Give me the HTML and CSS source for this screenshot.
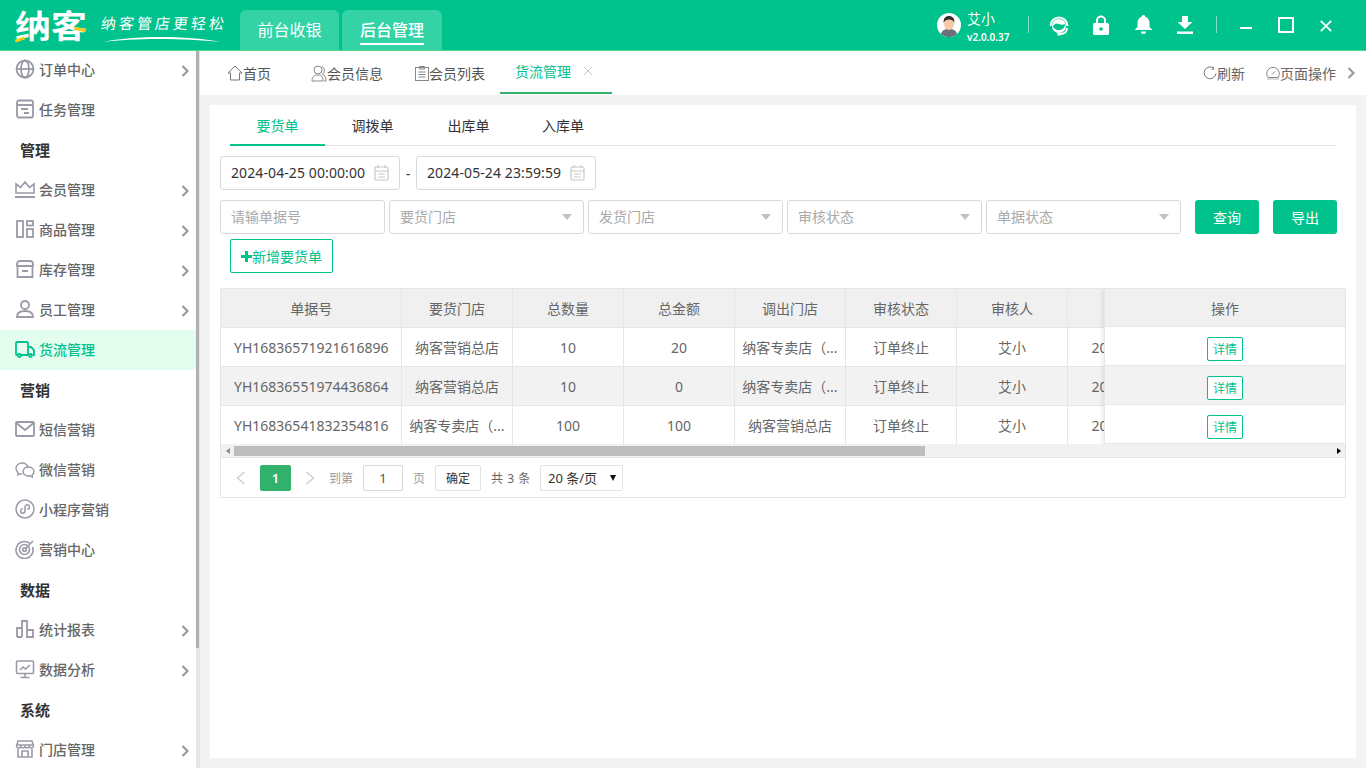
FILE: index.html

```html
<!DOCTYPE html>
<html lang="zh-CN">
<head>
  <meta charset="UTF-8">
  <title>纳客 - 货流管理</title>
  <link rel="stylesheet" href="styles.css">
</head>
<body>

  <svg class="defs" width="0" height="0">
    <defs>
      <symbol id="chev" viewBox="0 0 8 12"><path d="M1.500 1l5 5-5 5" fill="none" stroke="#9a9aa8" stroke-width="2.200"/></symbol>
      <symbol id="cal" viewBox="0 0 15 16"><g fill="none" stroke="#c8c8c8" stroke-width="1.200"><rect x="1" y="2" width="13" height="13" rx="1"/><path d="M1 6h13M4 0v3M11 0v3M4 9h7M4 12h7"/></g></symbol>
    </defs>
  </svg>

  <header class="topbar">
    <div class="logo">
      <span class="logo-name">纳客</span>
      <i class="logo-mark mark-a"></i>
      <i class="logo-mark mark-b"></i>
      <div class="slogan">
        <span>纳客管店更轻松</span>
        <svg width="118" height="8" viewBox="0 0 118 8"><path d="M0 7C30 1 80 0 118 7C80 3 30 3 0 7z" fill="#fff"/></svg>
      </div>
    </div>
    <nav class="top-tabs">
      <a class="top-tab">前台收银</a>
      <a class="top-tab on"><span>后台管理</span></a>
    </nav>
    <div class="top-right">
      <svg class="avatar" width="24" height="24" viewBox="0 0 24 24">
        <circle cx="12" cy="12" r="12" fill="#fff"/>
        <path d="M4 21c1-4 4-5 8-5s7 1 8 5a12 12 0 0 1-16 0z" fill="#6d6f78"/>
        <ellipse cx="12" cy="11" rx="5" ry="6" fill="#f5c9a8"/>
        <path d="M6.700 10c-.5-5 2-7 5.300-7s5.800 2 5.300 7c-1-3-3-3.500-5.300-3.500S7.700 7 6.700 10z" fill="#33302e"/>
      </svg>
      <div class="user">
        <span class="user-name">艾小</span>
        <span class="user-ver">v2.0.0.37</span>
      </div>
      <i class="sep sep-a"></i>
      <svg class="ti ti-head" width="22" height="22" viewBox="0 0 22 22">
        <path d="M2.500 12a8.500 8.500 0 0 1 17 0" fill="none" stroke="#fff" stroke-width="2"/>
        <circle cx="11" cy="12" r="7" fill="#fff"/>
        <path d="M5 12c2-3 4-3 6-2s4 1 6 0c0 4-3 6-6 6s-6-2-6-4z" fill="#00c28c"/>
        <path d="M19 14c0 4-3 6-7 6" fill="none" stroke="#fff" stroke-width="1.800"/>
        <circle cx="11" cy="20" r="1.800" fill="#fff"/>
      </svg>
      <svg class="ti ti-lock" width="16" height="20" viewBox="0 0 16 20">
        <path d="M4 9V5.500a4 4 0 0 1 8 0V9" fill="none" stroke="#fff" stroke-width="2"/>
        <rect y="8" width="16" height="12" rx="1.500" fill="#fff"/>
        <circle cx="8" cy="14" r="1.800" fill="#00c28c"/>
      </svg>
      <svg class="ti ti-bell" width="17" height="19" viewBox="0 0 17 19">
        <path d="M8.500 0c1 0 1.500.6 1.500 1.400C13 2.200 14.500 5 14.500 8v4l2.500 2.500V15H0v-.5L2.500 12V8C2.500 5 4 2.200 7 1.400 7 .6 7.500 0 8.500 0z" fill="#fff"/>
        <path d="M6 16.500h5a2.500 2.500 0 0 1-5 0z" fill="#fff"/>
      </svg>
      <svg class="ti ti-down" width="16" height="18" viewBox="0 0 16 18">
        <path d="M5 0h6v6h4.500L8 13 .5 6H5z" fill="#fff"/>
        <rect y="15.500" width="16" height="2.500" fill="#fff"/>
      </svg>
      <i class="sep sep-b"></i>
      <i class="win-min"></i>
      <i class="win-max"></i>
      <svg class="win-close" width="12" height="12" viewBox="0 0 12 12"><path d="M.8.8l10.400 10.400M11.200.8L.8 11.200" stroke="#fff" stroke-width="1.800"/></svg>
    </div>
  </header>

  <div class="wrap">
    <aside class="side">
      <div class="side-list">
        <a class="item">
          <svg viewBox="0 0 20 20"><g fill="none" stroke="#9a9aa8" stroke-width="1.800"><circle cx="10" cy="10" r="8.500"/><ellipse cx="10" cy="10" rx="4" ry="8.500"/><path d="M1.500 10h17"/></g></svg>
          <span>订单中心</span><svg class="chev"><use href="#chev"/></svg>
        </a>
        <a class="item">
          <svg viewBox="0 0 20 20"><g fill="none" stroke="#9a9aa8" stroke-width="1.800"><rect x="2" y="1.500" width="16" height="17" rx="2"/><path d="M2 6h16M6 10h7M9 14h5"/></g></svg>
          <span>任务管理</span>
        </a>
        <div class="group">管理</div>
        <a class="item">
          <svg viewBox="0 0 20 20"><g fill="none" stroke="#9a9aa8" stroke-width="1.600"><path d="M1 14V5l4.500 3.500L10 3l4.500 5.500L19 5v9z"/><path d="M0 18h20" stroke-width="2"/></g></svg>
          <span>会员管理</span><svg class="chev"><use href="#chev"/></svg>
        </a>
        <a class="item">
          <svg viewBox="0 0 20 20"><g fill="none" stroke="#9a9aa8" stroke-width="1.800"><rect x="2" y="2" width="6" height="16"/><rect x="12" y="2" width="6" height="4.500"/><rect x="12" y="10" width="6" height="8"/></g></svg>
          <span>商品管理</span><svg class="chev"><use href="#chev"/></svg>
        </a>
        <a class="item">
          <svg viewBox="0 0 20 20"><g fill="none" stroke="#9a9aa8" stroke-width="1.800"><path d="M2 7V5a3 3 0 0 1 3-3h10a3 3 0 0 1 3 3v2M1.500 7h17"/><path d="M2.500 7v11h15V7M7 12h6"/></g></svg>
          <span>库存管理</span><svg class="chev"><use href="#chev"/></svg>
        </a>
        <a class="item">
          <svg viewBox="0 0 20 20"><g fill="none" stroke="#9a9aa8" stroke-width="1.800"><circle cx="10" cy="6" r="4"/><path d="M2 18c0-4 3-6 8-6s8 2 8 6z"/></g></svg>
          <span>员工管理</span><svg class="chev"><use href="#chev"/></svg>
        </a>
        <a class="item active">
          <svg viewBox="0 0 20 20"><g fill="none" stroke="#00c28c" stroke-width="1.800"><path d="M13 16H6M3 16H2a1 1 0 0 1-1-1V4a1 1 0 0 1 1-1h10a1 1 0 0 1 1 1v12"/><path d="M13 8h3l3 3v5h-1"/><circle cx="4.500" cy="16.500" r="1.500"/><circle cx="15.500" cy="16.500" r="1.500"/></g></svg>
          <span>货流管理</span>
        </a>
        <div class="group">营销</div>
        <a class="item">
          <svg viewBox="0 0 20 20"><g fill="none" stroke="#9a9aa8" stroke-width="1.800"><rect x="1" y="3" width="18" height="14" rx="1"/><path d="M1.500 4l8.500 7 8.500-7"/></g></svg>
          <span>短信营销</span>
        </a>
        <a class="item">
          <svg viewBox="0 0 20 20"><g fill="none" stroke="#9a9aa8" stroke-width="1.400"><path d="M7 15c-.8 0-1.400-.1-2-.3L3 16v-2.500C1.800 12.400 1 11 1 9.500 1 6.400 3.700 4 7 4c2.800 0 5.200 1.700 5.800 4"/><path d="M13.500 8c3 0 5.500 2 5.500 4.500 0 1.300-.7 2.500-1.700 3.300V18l-2-1.200c-.6.100-1.200.2-1.800.2-3 0-5.500-2-5.500-4.500S10.500 8 13.500 8z"/></g></svg>
          <span>微信营销</span>
        </a>
        <a class="item">
          <svg viewBox="0 0 20 20"><g fill="none" stroke="#9a9aa8" stroke-width="1.500"><circle cx="10" cy="10" r="9"/><path d="M10 8v4a2.200 2.200 0 1 1-2.200-2.200M10 12V8a2.200 2.200 0 1 1 2.200 2.200"/></g></svg>
          <span>小程序营销</span>
        </a>
        <a class="item">
          <svg viewBox="0 0 20 20"><g fill="none" stroke="#9a9aa8" stroke-width="1.600"><path d="M15 4.500A8.500 8.500 0 1 0 17.500 8"/><circle cx="9.500" cy="10.500" r="5"/><circle cx="9.500" cy="10.500" r="1.800"/><path d="M10 10l8-8"/></g></svg>
          <span>营销中心</span>
        </a>
        <div class="group">数据</div>
        <a class="item">
          <svg viewBox="0 0 20 20"><g fill="none" stroke="#9a9aa8" stroke-width="1.800"><path d="M2 18v-9h5v9M7 18V2h5v16M12 18v-7h6v7zM2 18h5"/></g></svg>
          <span>统计报表</span><svg class="chev"><use href="#chev"/></svg>
        </a>
        <a class="item">
          <svg viewBox="0 0 20 20"><g fill="none" stroke="#9a9aa8" stroke-width="1.600"><rect x="1.500" y="2" width="17" height="12.500" rx="1"/><path d="M5 11l3-3 2.500 2L15 6M10 14.500V18M5.500 18.500h9"/></g></svg>
          <span>数据分析</span><svg class="chev"><use href="#chev"/></svg>
        </a>
        <div class="group">系统</div>
        <a class="item">
          <svg viewBox="0 0 20 20"><g fill="none" stroke="#9a9aa8" stroke-width="1.600"><path d="M3 2h14l1.500 5a2.200 2.200 0 0 1-4.300.5 2.200 2.200 0 0 1-4.200 0 2.200 2.200 0 0 1-4.200 0A2.200 2.200 0 0 1 1.500 7z"/><path d="M3 10v8h14v-8M7 18v-6h6v6M1.500 6h17"/></g></svg>
          <span>门店管理</span><svg class="chev"><use href="#chev"/></svg>
        </a>
      </div>
      <div class="side-bar"><i></i></div>
    </aside>

    <main class="main">
      <div class="tabs">
        <a class="tab t-home">
          <svg width="16" height="16" viewBox="0 0 16 16"><path d="M1 8l7-7 7 7h-2.500v7h-9V8z" fill="none" stroke="#777" stroke-width="1"/></svg>首页
        </a>
        <a class="tab t-info">
          <svg width="16" height="17" viewBox="0 0 16 17"><g fill="none" stroke="#888" stroke-width="1"><circle cx="7" cy="5" r="4"/><path d="M1 16c0-4 2-6 6-6s5 2 5 6zM11 1.500c3 1 3 6 .5 7.500 2 1 3.500 3 3.500 7h-2"/></g></svg>会员信息
        </a>
        <a class="tab t-list">
          <svg width="14" height="15" viewBox="0 0 14 15"><g fill="none" stroke="#888" stroke-width="1"><rect x=".5" y="1.500" width="13" height="13"/><path d="M4.500 .5h5v2.500h-5zM3.500 6h7M3.500 8.500h7M3.500 11h7"/></g></svg>会员列表
        </a>
        <a class="tab t-cur">货流管理<svg width="10" height="10" viewBox="0 0 10 10"><path d="M.5.500l9 9M9.500.500l-9 9" stroke="#ccc" stroke-width="1"/></svg></a>
        <div class="tab-tools">
          <a class="tool t-refresh">
            <svg width="14" height="14" viewBox="0 0 14 14"><path d="M10.800 2.300A5.900 5.900 0 1 0 12.900 7.500M10 .8l.9 2.200-2.300.5" fill="none" stroke="#777" stroke-width="1"/></svg>刷新
          </a>
          <a class="tool t-ops">
            <svg width="14" height="14" viewBox="0 0 14 14"><path d="M2 11.500a6.300 6.300 0 1 1 10 0z M6 8.500l3-3" fill="none" stroke="#888" stroke-width="1"/><path d="M1 13h12" stroke="#ccc" stroke-width="1.500"/></svg>页面操作
          </a>
          <svg class="tool-chev"><use href="#chev"/></svg>
        </div>
      </div>

      <section class="card">
        <div class="subtabs">
          <a class="subtab on">要货单</a>
          <a class="subtab">调拨单</a>
          <a class="subtab st-out">出库单</a>
          <a class="subtab st-in">入库单</a>
        </div>

        <div class="date-row">
          <div class="field date">2024-04-25 00:00:00<svg><use href="#cal"/></svg></div>
          <span class="dash">-</span>
          <div class="field date">2024-05-24 23:59:59<svg><use href="#cal"/></svg></div>
        </div>

        <div class="filter-row">
          <div class="field ph f-no">请输单据号</div>
          <div class="field ph sel">要货门店</div>
          <div class="field ph sel">发货门店</div>
          <div class="field ph sel">审核状态</div>
          <div class="field ph sel">单据状态</div>
          <a class="btn">查询</a>
          <a class="btn">导出</a>
        </div>

        <a class="add"><svg width="11" height="11" viewBox="0 0 11 11"><path d="M4 0h3v4h4v3H7v4H4V7H0V4h4z" fill="#00c28c"/></svg>新增要货单</a>

        <div class="grid">
          <div class="grid-scroll">
            <table>
              <colgroup>
                <col class="c-first"><col class="c"><col class="c"><col class="c"><col class="c"><col class="c"><col class="c"><col class="c-time-col">
              </colgroup>
              <thead>
                <tr><th>单据号</th><th>要货门店</th><th>总数量</th><th>总金额</th><th>调出门店</th><th>审核状态</th><th>审核人</th><th></th></tr>
              </thead>
              <tbody>
                <tr><td>YH16836571921616896</td><td>纳客营销总店</td><td>10</td><td>20</td><td>纳客专卖店（...</td><td>订单终止</td><td>艾小</td><td class="c-time">20</td></tr>
                <tr class="alt"><td>YH16836551974436864</td><td>纳客营销总店</td><td>10</td><td>0</td><td>纳客专卖店（...</td><td>订单终止</td><td>艾小</td><td class="c-time">20</td></tr>
                <tr><td>YH16836541832354816</td><td>纳客专卖店（...</td><td>100</td><td>100</td><td>纳客营销总店</td><td>订单终止</td><td>艾小</td><td class="c-time">20</td></tr>
              </tbody>
            </table>
            <div class="grid-fixed">
              <div class="fx-head">操作</div>
              <div class="fx-cell"><a class="detail">详情</a></div>
              <div class="fx-cell alt"><a class="detail">详情</a></div>
              <div class="fx-cell"><a class="detail">详情</a></div>
            </div>
          </div>
          <div class="hscroll">
            <i class="arrow-l"></i>
            <div class="thumb-track"><i class="thumb"></i></div>
            <i class="arrow-r"></i>
          </div>
          <div class="pager">
            <svg class="pg-prev" width="10" height="14" viewBox="0 0 10 14"><path d="M8.500 1l-7 6 7 6" fill="none" stroke="#ccc" stroke-width="1.300"/></svg>
            <a class="pg-cur">1</a>
            <svg class="pg-next" width="10" height="14" viewBox="0 0 10 14"><path d="M1.500 1l7 6-7 6" fill="none" stroke="#ccc" stroke-width="1.300"/></svg>
            <span class="pg-to">到第</span>
            <div class="pg-input">1</div>
            <span class="pg-page">页</span>
            <a class="pg-ok">确定</a>
            <span class="pg-total">共 3 条</span>
            <div class="pg-size">20 条/页<i></i></div>
          </div>
        </div>
      </section>
    </main>
  </div>

</body>
</html>
```

FILE: styles.css

```css
* { box-sizing: border-box; }
html, body { height: 100%; }
body {
  margin: 0;
  height: 768px;
  overflow: hidden;
  font-family: "Noto Sans", "Noto Sans CJK SC", sans-serif;
  font-size: 14px;
  color: #333;
  background: #f3f3f3;
}
.defs { position: absolute; }
a { display: block; }

/* top bar */
.topbar {
  height: 51px;
  display: flex;
  background: #00c28c;
  border-bottom: 1px solid #4cd98a;
  color: #fff;
}
.logo { width: 240px; position: relative; }
.logo-name {
  position: absolute;
  left: 15px;
  top: 5px;
  font-size: 36px;
  line-height: 44px;
  font-weight: 700;
  transform: scaleY(.88);
}
.logo-mark { position: absolute; background: #ffc81e; height: 3px; }
.mark-a { left: 15px; top: 38px; width: 10px; transform: rotate(-20deg); }
.mark-b { left: 74px; top: 28px; width: 12px; transform: rotate(12deg); }
.slogan { position: absolute; left: 101px; top: 12px; }
.slogan span {
  display: block;
  font-size: 15px;
  line-height: 22px;
  letter-spacing: 3px;
  transform: skewX(-8deg);
  white-space: nowrap;
}
.slogan svg { display: block; margin: 1px 0 0 2px; }
.top-tabs { display: flex; gap: 3px; padding-top: 10px; }
.top-tab {
  width: 99px;
  height: 40px;
  background: #33d3a6;
  border-radius: 6px 6px 0 0;
  text-align: center;
  font-size: 16px;
  line-height: 40px;
}
.top-tab.on { width: 100px; font-weight: 500; }
.top-tab.on span {
  display: inline-block;
  height: 35px;
  line-height: 40px;
  border-bottom: 2px solid #fff;
}
.top-right { flex: 1; display: flex; align-items: flex-start; padding-left: 495px; }
.top-right > * { flex: none; }
.avatar { margin-top: 13px; }
.user { width: 41px; margin: 10px 0 0 6px; }
.user span { display: block; white-space: nowrap; }
.user-name { font-size: 14px; line-height: 18px; }
.user-ver { font-size: 10px; line-height: 14px; margin-top: 2px; font-weight: 600; }
.sep { width: 1px; height: 17px; margin-top: 16px; background: rgba(255, 255, 255, .5); }
.sep-a { margin-left: 20px; }
.sep-b { margin-left: 23px; }
.ti-head { margin: 14px 0 0 19px; }
.ti-lock { margin: 15px 0 0 23px; }
.ti-bell { margin: 15px 0 0 26px; }
.ti-down { margin: 16px 0 0 25px; }
.win-min { margin: 27px 0 0 23px; width: 12px; height: 2px; background: #fff; }
.win-max { margin: 17px 0 0 26px; width: 16px; height: 16px; border: 2px solid #fff; }
.win-close { margin: 20px 0 0 26px; }

/* side menu */
.wrap { display: flex; height: 717px; }
.side { width: 200px; display: flex; overflow: hidden; background: #fff; flex: none; }
.side-list { width: 196px; margin-top: -1px; flex: none; }
.item {
  height: 40px;
  display: flex;
  align-items: center;
  padding: 0 0 2px 15px;
  color: #666;
  font-weight: 500;
  font-size: 14px;
  position: relative;
}
.item > svg:first-child { width: 20px; height: 20px; margin-right: 4px; flex: none; }
.item .chev { position: absolute; left: 181px; top: 15px; width: 8px; height: 12px; }
.item.active { background: #e3fdee; color: #00c28c; }
.group {
  height: 40px;
  padding-left: 20px;
  line-height: 40px;
  font-weight: 700;
  color: #333;
  font-size: 15px;
}
.side-bar { width: 4px; background: #e6e6e6; }
.side-bar i { display: block; height: 597px; width: 3px; background: #b0b0b0; }

/* main */
.main { flex: 1; min-width: 0; }
.tabs { height: 44px; background: #fff; display: flex; position: relative; }
.tab {
  display: flex;
  align-items: center;
  height: 44px;
  color: #555;
  font-size: 14px;
  position: absolute;
  top: 0;
  white-space: nowrap;
}
.t-home { left: 27px; }
.t-info { left: 111px; }
.t-list { left: 215px; }
.t-cur {
  left: 300px;
  width: 112px;
  height: 43px;
  padding: 0 0 2px 15px;
  color: #00c28c;
  border-bottom: 2px solid #32b16c;
}
.t-cur svg { margin-left: 12px; }
.tab-tools { position: absolute; right: 0; top: 0; height: 44px; display: flex; align-items: center; color: #666; }
.tool { display: flex; align-items: center; margin-right: 21px; font-size: 14px; }
.tool svg { flex: none; }
.t-ops { margin-right: 11px; }
.tool-chev { width: 8px; height: 12px; margin-right: 11px; }

.card {
  margin: 10px 10px 0;
  height: 653px;
  background: #fff;
  padding: 0 10px;
}
.subtabs {
  display: flex;
  height: 41px;
  margin: 0 10px;
  border-bottom: 1px solid #e6e6e6;
}
.subtab {
  width: 95px;
  height: 41px;
  text-align: center;
  line-height: 41px;
  font-size: 14px;
  color: #333;
}
.subtab.on { color: #00c28c; border-bottom: 2px solid #00c28c; }
.st-out { width: 97px; }
.st-in { width: 92px; }

.field {
  height: 34px;
  border: 1px solid #d9d9d9;
  border-radius: 3px;
  padding: 0 10px;
  line-height: 32px;
  font-size: 14px;
  color: #333;
  white-space: nowrap;
}
.date-row { display: flex; align-items: center; margin-top: 10px; }
.date { width: 180px; display: flex; align-items: center; letter-spacing: .1px; }
.date svg { width: 15px; height: 16px; margin-left: auto; flex: none; }
.dash { width: 16px; text-align: center; color: #333; }
.filter-row { display: flex; gap: 4px; margin-top: 10px; }
.ph { color: #aaa; width: 195px; position: relative; line-height: 31px; }
.f-no { width: 165px; }
.sel::after {
  content: "";
  position: absolute;
  right: 11px;
  top: 13px;
  border-style: solid;
  border-width: 6px 5.500px 0;
  border-color: #c2c2c2 transparent transparent;
}
.btn {
  width: 64px;
  height: 34px;
  margin-left: 10px;
  background: #00c28c;
  border-radius: 3px;
  color: #fff;
  text-align: center;
  line-height: 35px;
  font-size: 14px;
}
.add {
  display: flex;
  align-items: center;
  width: 103px;
  height: 34px;
  margin: 5px 0 0 10px;
  border: 1px solid #00c28c;
  border-radius: 2px;
  color: #00c28c;
  padding-left: 10px;
  font-size: 14px;
  white-space: nowrap;
}

/* table */
.grid {
  width: 1126px;
  height: 210px;
  margin-top: 15px;
  border: 1px solid #e6e6e6;
}
.grid-scroll { position: relative; height: 155px; overflow: hidden; }
table { border-collapse: collapse; table-layout: fixed; width: 1027px; }
.c-first { width: 180px; }
.c { width: 111px; }
.c-time-col { width: 181px; }
th, td {
  height: 39px;
  padding: 1px 0 0 1px;
  border: 1px solid #e6e6e6;
  border-top: 0;
  border-left: 0;
  text-align: center;
  font-size: 14px;
  font-weight: 400;
  color: #666;
  white-space: nowrap;
  overflow: hidden;
}
th { background: #f0f0f0; height: 38px; }
tr.alt td { background: #f2f2f2; }
td.c-time { text-align: left; padding-left: 24px; }
.grid-fixed {
  position: absolute;
  right: 0;
  top: 0;
  width: 241px;
  background: #fff;
  box-shadow: -2px 0 4px rgba(0, 0, 0, .08);
  border-left: 1px solid #e6e6e6;
}
.fx-head {
  height: 38px;
  background: #f0f0f0;
  border-bottom: 1px solid #e6e6e6;
  text-align: center;
  line-height: 40px;
  color: #666;
}
.fx-cell {
  height: 39px;
  border-bottom: 1px solid #e6e6e6;
  display: flex;
  justify-content: center;
  align-items: center;
  padding-top: 6px;
}
.fx-cell.alt { background: #f2f2f2; }
.detail {
  width: 36px;
  height: 24px;
  border: 1px solid #00c28c;
  border-radius: 2px;
  color: #00c28c;
  text-align: center;
  font-size: 12px;
  line-height: 24px;
  background: #fff;
}
.hscroll {
  height: 14px;
  background: #f1f1f1;
  border-bottom: 1px solid #e6e6e6;
  display: flex;
  align-items: center;
}
.arrow-l, .arrow-r { width: 13px; height: 12px; flex: none; position: relative; }
.arrow-l::after, .arrow-r::after {
  content: "";
  position: absolute;
  top: 3px;
  border-style: solid;
  border-width: 3px 4px;
  border-color: transparent;
}
.arrow-l::after { left: 1px; border-right-color: #888; }
.arrow-r::after { left: 5px; border-left-color: #000; }
.thumb-track { flex: 1; height: 10px; }
.thumb { display: block; width: 691px; height: 10px; background: #bdbdbd; }

.pager {
  height: 39px;
  display: flex;
  align-items: center;
  font-size: 12px;
  color: #999;
  padding-top: 1px;
}
.pg-prev { margin-left: 15px; }
.pg-cur {
  width: 31px;
  height: 26px;
  margin-left: 14px;
  background: #32b16c;
  border-radius: 2px;
  color: #fff;
  text-align: center;
  line-height: 26px;
  font-size: 13px;
  font-weight: 600;
}
.pg-next { margin-left: 14px; }
.pg-to { margin-left: 14px; }
.pg-input {
  width: 40px;
  height: 26px;
  margin-left: 10px;
  border: 1px solid #d9d9d9;
  border-radius: 2px;
  text-align: center;
  line-height: 24px;
  color: #555;
  font-size: 13px;
}
.pg-page { margin-left: 10px; }
.pg-ok {
  width: 46px;
  height: 26px;
  margin-left: 10px;
  border: 1px solid #e2e2e2;
  border-radius: 2px;
  text-align: center;
  line-height: 26px;
  color: #333;
}
.pg-total { margin-left: 10px; width: 49px; color: #666; white-space: nowrap; word-spacing: 1px; }
.pg-size {
  width: 83px;
  height: 26px;
  border: 1px solid #e2e2e2;
  border-radius: 2px;
  padding-left: 7px;
  line-height: 24px;
  color: #333;
  font-size: 13px;
  position: relative;
  white-space: nowrap;
}
.pg-size i {
  position: absolute;
  right: 6px;
  top: 9px;
  border-style: solid;
  border-width: 6px 3.500px 0;
  border-color: #111 transparent transparent;
}
```
